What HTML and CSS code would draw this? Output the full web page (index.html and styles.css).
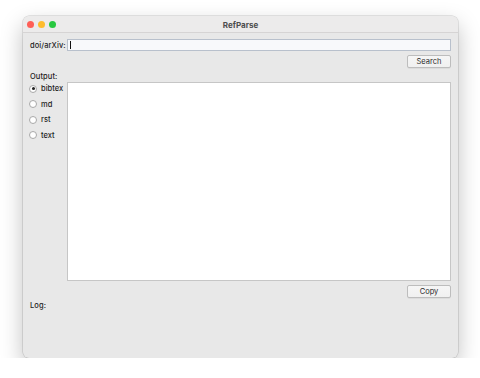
FILE: index.html
```html
<!DOCTYPE html>
<html>
<head>
<meta charset="utf-8">
<link rel="stylesheet" href="styles.css">
</head>
<body>
<div class="window">
  <div class="titlebar">
    <div class="lights">
      <span class="light red"></span>
      <span class="light yellow"></span>
      <span class="light green"></span>
    </div>
    <div class="title">RefParse</div>
  </div>
  <div class="content">
    <div class="row-input">
      <span class="label">doi/arXiv:</span>
      <div class="input"><span class="caret"></span></div>
    </div>
    <div class="row-btn"><span class="btn">Search</span></div>
    <div class="label out-label">Output:</div>
    <div class="row-output">
      <div class="radios">
        <div class="radio-item"><span class="radio checked"></span><span>bibtex</span></div>
        <div class="radio-item"><span class="radio"></span><span>md</span></div>
        <div class="radio-item"><span class="radio"></span><span>rst</span></div>
        <div class="radio-item"><span class="radio"></span><span>text</span></div>
      </div>
      <div class="textarea"></div>
    </div>
    <div class="row-btn copy-row"><span class="btn">Copy</span></div>
    <div class="label log-label">Log:</div>
  </div>
</div>
</body>
</html>
```
FILE: styles.css
```css
html, body {
  margin: 0;
  padding: 0;
  background: #ffffff;
}
body {
  font-family: "Inter", "Liberation Sans", sans-serif;
  font-size: 8px;
  color: #222;
  padding-top: 16px;
  padding-left: 23px;
}
.window {
  width: 435px;
  height: 342px;
  background: #e8e8e8;
  border-radius: 6px;
  box-shadow: 0 9px 22px rgba(0,0,0,0.25), 0 0 0 0.5px rgba(0,0,0,0.18);
  overflow: hidden;
  display: flex;
  flex-direction: column;
}
.titlebar {
  height: 16px;
  flex: none;
  background: #ecebeb;
  border-bottom: 1px solid #d6d4d4;
  position: relative;
  display: flex;
  align-items: center;
  justify-content: center;
}
.lights {
  position: absolute;
  left: 4px;
  top: 5px;
  display: flex;
  gap: 4px;
}
.light {
  width: 7px;
  height: 7px;
  border-radius: 50%;
  display: block;
}
.red { background: #fe5f57; }
.yellow { background: #febc2e; }
.green { background: #28c840; }
.title {
  font-weight: 700;
  font-size: 8px;
  color: #4d4d4d;
  margin-top: 1px;
}
.content {
  padding: 6px 7px 0 7px;
  display: flex;
  flex-direction: column;
}
.label {
  font-size: 7.5px;
  font-weight: 500;
  color: #1e1e1e;
  letter-spacing: 0.1px;
}
.row-input {
  display: flex;
  align-items: center;
  height: 12px;
}
.row-input .label {
  width: 37px;
  flex: none;
}
.input {
  flex: 1;
  height: 10px;
  background: #f8f9fb;
  border: 1px solid #b8c0cc;
  position: relative;
  display: flex;
  align-items: center;
  padding-left: 2px;
}
.caret {
  width: 1px;
  height: 8px;
  background: #111;
  display: block;
}
.row-btn {
  display: flex;
  justify-content: flex-end;
  margin-top: 4px;
}
.btn {
  width: 42px;
  height: 11px;
  background: linear-gradient(#f6f6f6, #f0f0f0);
  border: 0.5px solid #bdbdbd;
  border-radius: 2px;
  box-shadow: 0 0.5px 0.5px rgba(0,0,0,0.1);
  display: flex;
  align-items: center;
  justify-content: center;
  font-size: 7.5px;
  color: #2a2a2a;
}
.out-label {
  margin-top: 4px;
  height: 10px;
  line-height: 10px;
}
.row-output {
  display: flex;
  margin-top: 0;
}
.radios {
  width: 37px;
  flex: none;
  display: flex;
  flex-direction: column;
  gap: 5px;
  padding-top: 1.5px;
}
.radio-item {
  display: flex;
  align-items: center;
  gap: 4px;
  height: 10.5px;
  font-size: 7.5px;
  color: #1e1e1e;
  font-weight: 500;
}
.radio {
  width: 6px;
  height: 6px;
  border-radius: 50%;
  background: #fff;
  border: 0.5px solid #a8a8a8;
  margin-left: -1px;
  display: flex;
  align-items: center;
  justify-content: center;
  flex: none;
}
.radio.checked::after {
  content: "";
  width: 3px;
  height: 3px;
  border-radius: 50%;
  background: #222;
  display: block;
}
.textarea {
  flex: 1;
  height: 197px;
  background: #ffffff;
  border: 0.5px solid #c6c6c6;
}
.copy-row {
  margin-top: 4px;
}
.log-label {
  margin-top: 3px;
  height: 10px;
  line-height: 10px;
}
```
